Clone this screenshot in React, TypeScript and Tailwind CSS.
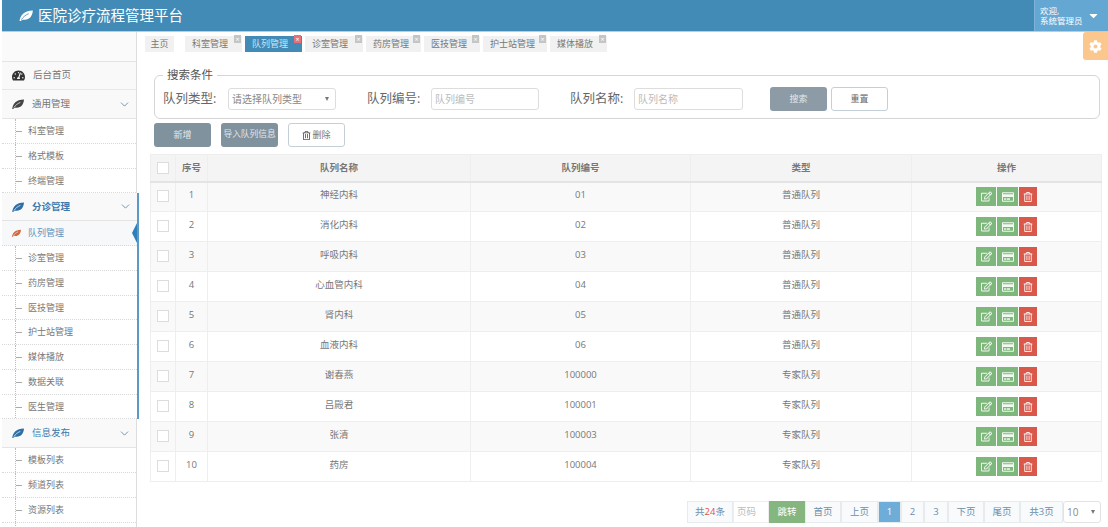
import { ChevronDown } from "lucide-react";
import { FaCaretDown, FaCog, FaRegCreditCard, FaRegEdit, FaRegTrashAlt, FaTachometerAlt } from "react-icons/fa";

const font = "font-['Open_Sans','Noto_Sans_CJK_SC',sans-serif]";

const tabs = [
  { label: "科室管理", w: "w-[57px]" },
  { label: "队列管理", w: "w-[57px]", active: true },
  { label: "诊室管理", w: "w-[58px]" },
  { label: "药房管理", w: "w-[55px]" },
  { label: "医技管理", w: "w-[56px]" },
  { label: "护士站管理", w: "w-[64px]" },
  { label: "媒体播放", w: "w-[57px]" },
];

const rows = [
  ["1", "神经内科", "01", "普通队列"],
  ["2", "消化内科", "02", "普通队列"],
  ["3", "呼吸内科", "03", "普通队列"],
  ["4", "心血管内科", "04", "普通队列"],
  ["5", "肾内科", "05", "普通队列"],
  ["6", "血液内科", "06", "普通队列"],
  ["7", "谢春燕", "100000", "专家队列"],
  ["8", "吕殿君", "100001", "专家队列"],
  ["9", "张清", "100003", "专家队列"],
  ["10", "药房", "100004", "专家队列"],
];

// 叶子图标
const Leaf = ({ className, vein }: { className: string; vein: string }) => (
  <svg viewBox="0 0 16 12" className={className}>
    <path d="M1.5 12C2.5 6 6 .8 16 .6 15.6 7 12 11 6.5 10.6 5 10.5 3.8 10.8 2.8 12Z" fill="currentColor" />
    <path d="M3.5 10.5C5.5 7.5 8 5.5 11.5 4" fill="none" strokeWidth="0.9" className={vein} />
  </svg>
);

const SubItem = ({ label, active }: { label: string; active?: boolean }) => (
  <div
    className={`relative flex h-[24.75px] items-center border-b border-dotted border-[#d8d8d8] pl-[26px] text-[9px] ${
      active ? "bg-[#f6f8fa] text-[#5a94c0]" : "text-[#777]"
    }`}
  >
    {active ? (
      <>
        <Leaf className="absolute left-[9px] top-[8px] h-[8px] w-[10px] text-[#d2693f]" vein="stroke-[#f6f8fa]" />
        <span className="absolute right-0 top-[2px] h-0 w-0 border-y-[10px] border-r-[5px] border-y-transparent border-r-[#2f7fbd]" />
      </>
    ) : (
      <>
        <span className="absolute left-[13px] top-0 h-full border-l border-dotted border-[#9cc3dc]" />
        <span className="absolute left-[14px] top-[12px] w-[6px] border-t border-dashed border-[#aaa]" />
      </>
    )}
    {label}
  </div>
);

const MenuHead = ({ label, color, icon, bold, h }: { label: string; color: string; icon: string; bold?: boolean; h: string }) => (
  <div className={`flex items-center border-b border-[#e4e4e4] bg-[#f9f9f9] pl-[9px] pr-[5px] text-[9.5px] ${h} ${bold ? "font-bold" : ""} ${color}`}>
    <Leaf className={`mr-[8px] h-[10px] w-[13px] ${icon}`} vein="stroke-[#f9f9f9]" />
    <span className="flex-1">{label}</span>
    <ChevronDown size={13} strokeWidth={1.5} className="text-[#5a7f9a]" />
  </div>
);

const Check = () => <span className="mx-auto block h-[12px] w-[12px] border border-[#ddd] bg-white" />;

const PageCell = ({ children, w, active }: { children: React.ReactNode; w: string; active?: boolean }) => (
  <span
    className={`flex h-full items-center justify-center border border-[#e6ebee] text-[9.5px] ${w} ${
      active ? "bg-[#6dadd8] text-white" : "bg-[#f9fafb] text-[#6a90ad]"
    }`}
  >
    {children}
  </span>
);

export default function App() {
  return (
    <div className={`${font} relative h-[527px] w-[1108px] overflow-hidden bg-white pl-[2px] text-[#777]`}>
      <header className="flex h-[32px] items-center border-b border-[#a9d3e6] bg-[#428bb7] text-white">
        <div className="flex flex-1 items-center pl-[16px] text-[14.5px]">
          <Leaf className="mr-[5px] h-[11px] w-[15px]" vein="stroke-[#428bb7]" />
          医院诊疗流程管理平台
        </div>
        <div className="flex h-full w-[74px] items-center border-l border-[#7cb3d6] bg-[#64a7d3] pl-[5px] text-[8.5px] leading-[10px]">
          <span className="flex-1">
            欢迎,
            <br />
            系统管理员
          </span>
          <FaCaretDown className="mr-[8px] text-[13px]" />
        </div>
      </header>

      <div className="flex">
        <aside className="h-[495px] w-[137px] shrink-0">
          <div className="mr-[2px] border-r border-[#ddd]">
            <div className="h-[30px] border-b border-[#e4e4e4] bg-[#fafafa]" />
            <div className="flex h-[28px] items-center border-b border-[#e8e8e8] bg-[#f9f9f9] pl-[10px] text-[9.5px]">
              <FaTachometerAlt className="mr-[8px] text-[13px] text-[#333]" />
              后台首页
            </div>
            <MenuHead label="通用管理" color="text-[#777]" icon="text-[#444]" h="h-[29px]" />
            <SubItem label="科室管理" />
            <SubItem label="格式模板" />
            <SubItem label="终端管理" />
          </div>
          <div className="border-r-2 border-[#5b9ac6]">
            <MenuHead label="分诊管理" color="text-[#3a78ad]" icon="text-[#2f6fa8]" bold h="h-[28px]" />
            <SubItem label="队列管理" active />
            <SubItem label="诊室管理" />
            <SubItem label="药房管理" />
            <SubItem label="医技管理" />
            <SubItem label="护士站管理" />
            <SubItem label="媒体播放" />
            <SubItem label="数据关联" />
            <SubItem label="医生管理" />
          </div>
          <div className="mr-[2px] border-r border-[#ddd]">
            <MenuHead label="信息发布" color="text-[#3a78ad]" icon="text-[#2f6fa8]" h="h-[29px]" />
            <SubItem label="模板列表" />
            <SubItem label="频道列表" />
            <SubItem label="资源列表" />
            <SubItem label="" />
          </div>
        </aside>

        <main className="min-w-0 flex-1 pl-[11px] pr-[7px]">
          <nav className="-ml-[5px] mt-[4px] flex h-[16px] gap-[3px] text-[9px]">
            <span className="mr-[8px] flex w-[29px] items-center justify-center bg-[#f0f1f0]">主页</span>
            {tabs.map((t) => (
              <span
                key={t.label}
                className={`relative flex items-center whitespace-nowrap pl-[7px] ${t.w} ${
                  t.active ? "bg-[#428bb7] text-[#cfe3f0]" : "bg-[#f0f1f0]"
                }`}
              >
                {t.label}
                <span
                  className={`absolute -top-[1px] right-px flex h-[8px] w-[7px] items-center justify-center text-[7px] leading-none text-white ${
                    t.active ? "bg-[#e8707c]" : "bg-[#c4c6c6]"
                  }`}
                >
                  ×
                </span>
              </span>
            ))}
          </nav>

          <fieldset className="ml-[4px] mt-[19px] h-[48px] w-[946px] rounded-[6px] border border-[#d5d5d5] pl-[8px]">
            <legend className="px-[4px] text-[11.5px] leading-[8px] text-[#555]">搜索条件</legend>
            <div className="mt-[8px] flex items-center text-[12.5px] text-[#666]">
              <span className="w-[65px] whitespace-nowrap">队列类型:</span>
              <span className="flex h-[22px] w-[108px] items-center justify-between rounded-[3px] border border-[#ddd] pl-[3px] pr-[6px] text-[10px] text-[#888]">
                请选择队列类型
                <span className="h-0 w-0 border-x-[2.5px] border-t-[4px] border-x-transparent border-t-[#777]" />
              </span>
              <span className="ml-[31px] w-[64px] whitespace-nowrap">队列编号:</span>
              <span className="flex h-[22px] w-[108px] items-center rounded-[3px] border border-[#ddd] pl-[3px] text-[10px] text-[#bbb]">队列编号</span>
              <span className="ml-[31px] w-[64px] whitespace-nowrap">队列名称:</span>
              <span className="flex h-[22px] w-[109px] items-center rounded-[3px] border border-[#ddd] pl-[3px] text-[10px] text-[#bbb]">队列名称</span>
              <span className="ml-[27px] flex h-[24px] w-[57px] items-center justify-center rounded-[3px] bg-[#8c9ba5] text-[9px] text-[#e3e8eb]">搜索</span>
              <span className="ml-[4px] flex h-[24px] w-[57px] items-center justify-center rounded-[3px] border border-[#c4d0d8] text-[9px]">重置</span>
            </div>
          </fieldset>

          <div className="ml-[4px] mt-[4px] flex h-[24px] gap-[10px] text-[9px]">
            <span className="flex w-[57px] items-center justify-center rounded-[3px] bg-[#7f929e] text-[#e3e8eb]">新增</span>
            <span className="flex w-[57px] items-center justify-center whitespace-nowrap rounded-[3px] bg-[#7f929e] text-[8.7px] text-[#e3e8eb]">导入队列信息</span>
            <span className="flex w-[57px] items-center justify-center rounded-[3px] border border-[#c4d0d8]">
              <FaRegTrashAlt className="mr-[1px] text-[9px] text-[#555]" />
              删除
            </span>
          </div>

          <table className="mt-[7px] w-[951px] table-fixed border-collapse text-center text-[9.5px]">
            <colgroup>
              <col className="w-[25px]" />
              <col className="w-[32px]" />
              <col className="w-[263px]" />
              <col className="w-[220px]" />
              <col className="w-[221px]" />
              <col className="w-[190px]" />
            </colgroup>
            <thead>
              <tr className="h-[27px] border-b-2 border-[#e4e4e4] bg-[#f4f4f4] font-bold">
                <th className="border border-[#eee]"><Check /></th>
                <th className="border border-[#eee]">序号</th>
                <th className="border border-[#eee]">队列名称</th>
                <th className="border border-[#eee]">队列编号</th>
                <th className="border border-[#eee]">类型</th>
                <th className="border border-[#eee]">操作</th>
              </tr>
            </thead>
            <tbody>
              {rows.map((r, i) => (
                <tr key={r[0]} className={`h-[30px] ${i % 2 === 0 ? "bg-[#f9f9f9]" : "bg-white"}`}>
                  <td className="border border-[#eee] pb-[2px]"><Check /></td>
                  <td className="border border-[#eee] pb-[3px]">{r[0]}</td>
                  <td className="border border-[#eee] pb-[3px]">{r[1]}</td>
                  <td className="border border-[#eee] pb-[3px]">{r[2]}</td>
                  <td className="border border-[#eee] pb-[3px]">{r[3]}</td>
                  <td className="border border-[#eee]">
                    <div className="flex justify-center gap-px text-[11px] text-white/90">
                      <span className="flex h-[19px] w-[20px] items-center justify-center bg-[#7eb77b]"><FaRegEdit /></span>
                      <span className="flex h-[19px] w-[21px] items-center justify-center bg-[#7eb77b]"><FaRegCreditCard className="text-[12px]" /></span>
                      <span className="flex h-[19px] w-[18px] items-center justify-center bg-[#d9584a]"><FaRegTrashAlt className="text-[10px]" /></span>
                    </div>
                  </td>
                </tr>
              ))}
            </tbody>
          </table>

          <div className="mt-[19px] flex h-[22px] justify-end">
            <PageCell w="w-[46px]">
              <span>共<span className="text-[#e8504a]">24</span>条</span>
            </PageCell>
            <span className="flex w-[36px] items-center border border-[#eee] pl-[3px] text-[9.5px] text-[#bbb]">页码</span>
            <span className="flex w-[36px] items-center justify-center bg-[#85b67f] text-[9.5px] text-white">跳转</span>
            <PageCell w="w-[36px]">首页</PageCell>
            <PageCell w="w-[37px]">上页</PageCell>
            <PageCell w="w-[23px]" active>1</PageCell>
            <PageCell w="w-[23px]">2</PageCell>
            <PageCell w="w-[24px]">3</PageCell>
            <PageCell w="w-[36px]">下页</PageCell>
            <PageCell w="w-[36px]">尾页</PageCell>
            <PageCell w="w-[43px]">共3页</PageCell>
            <span className="flex w-[38px] items-center justify-between rounded-[3px] border border-[#e2e2e2] pl-[3px] pr-[5px] text-[10px] text-[#888]">
              10
              <span className="h-0 w-0 border-x-[2.5px] border-t-[4px] border-x-transparent border-t-[#777]" />
            </span>
          </div>
        </main>
      </div>

      <div className="absolute right-0 top-[32px] flex h-[28px] w-[25px] items-center justify-center rounded-l-[3px] bg-[#fbc78c] text-[13px] text-white">
        <FaCog />
      </div>
    </div>
  );
}
